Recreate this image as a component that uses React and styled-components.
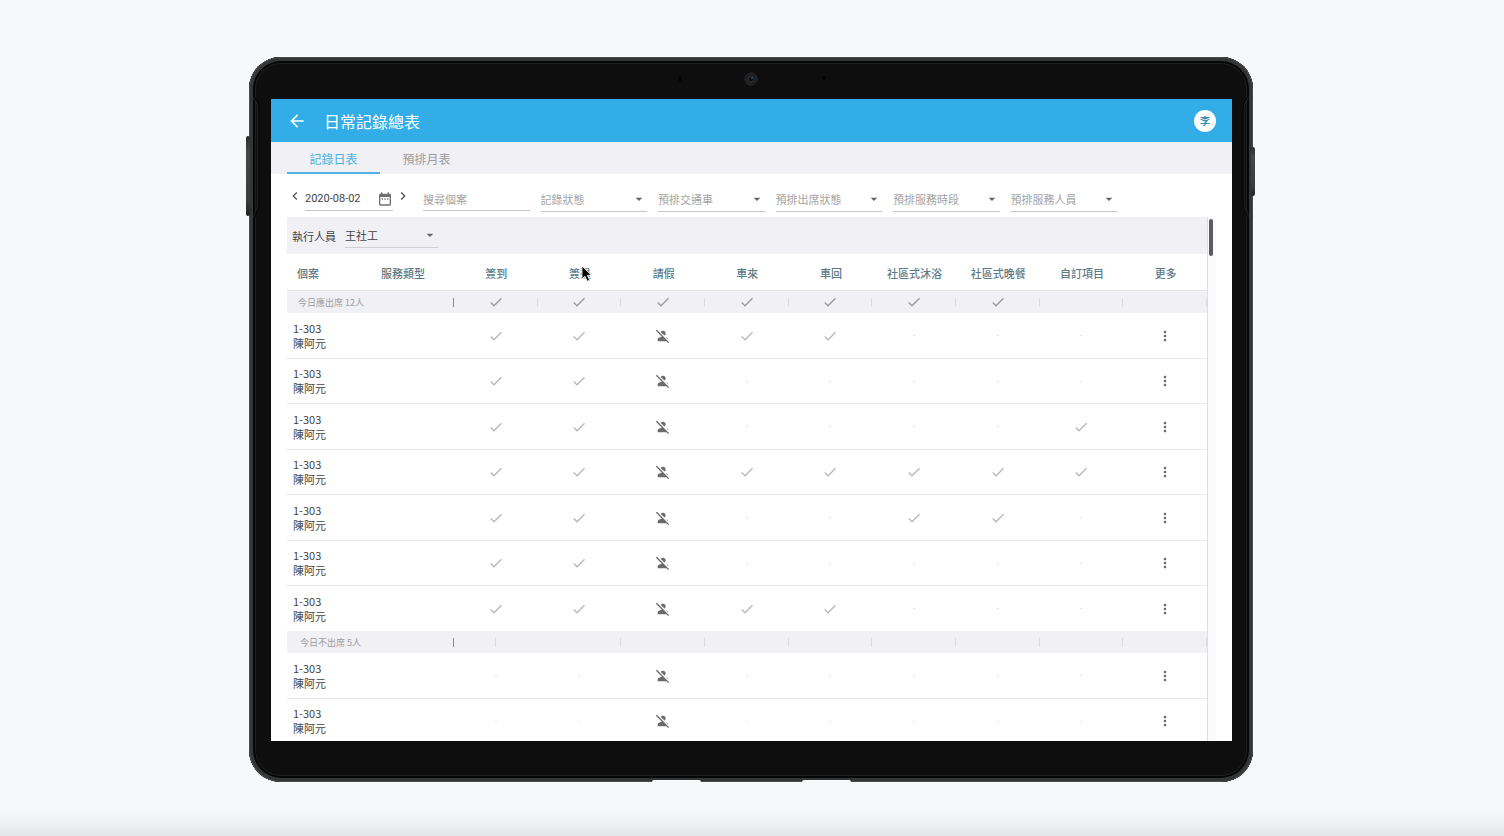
import React from 'react';
import styled, { createGlobalStyle } from 'styled-components';
import {
    MdArrowBack,
    MdArrowDropDown,
    MdCheck,
    MdChevronLeft,
    MdChevronRight,
    MdDateRange,
    MdMoreVert,
    MdPersonOff
} from 'react-icons/md';

const GlobalStyle = createGlobalStyle`
    *, *::before, *::after {
        box-sizing: border-box;
    }
    body {
        margin: 0;
        background-color: #f7f8fa;
        font-family: "Noto Sans CJK TC", "Noto Sans", sans-serif;
        font-size: 11px;
        color: #444;
    }
    button, input, select {
        font: inherit;
        color: inherit;
        border: none;
        border-radius: 0;
        background: none;
        padding: 0;
        margin: 0;
        outline: none;
    }
    svg {
        display: block;
    }
`;

const Page = styled.main`
    height: 100vh;
    min-height: 480px;
    padding: 57px 18px 54px 16px;
    background: linear-gradient(to top, #e4e5e7 0, #f1f2f4 14px, #f7f8fa 28px);
`;

const Device = styled.div`
    position: relative;
    max-width: 1004px;
    height: 100%;
    margin: 0 auto;
    padding: 42px 21px 41px 22px;
    border-radius: 32px;
    background-color: #0e0e0e;
    box-shadow: inset 0 0 0 1px #4a4b4b, inset 0 0 0 4px #343535, inset 0 0 0 6px #060606, inset 0 0 0 7px #1f1f1f;
`;

const SideButton = styled.span`
    position: absolute;
    top: ${props => props.$top};
    ${props => props.$side}: ${props => (props.$side === "left" ? "-3px" : "-2px")};
    width: 4px;
    height: ${props => props.$height};
    border-radius: 2px;
    background: linear-gradient(#2c2c2c, #464646 20%, #3c3c3c 80%, #222);
`;

const SideNotch = styled.svg`
    position: absolute;
    top: 40px;
    ${props => props.$side}: 3px;
    ${props => props.$side === "right" && "transform: scaleX(-1);"}
`;

const Foot = styled.span`
    position: absolute;
    bottom: 0;
    left: ${props => props.$left};
    width: 49px;
    height: 2px;
    border-radius: 2px 2px 0 0;
    background-color: #f7f8fa;
`;

const CameraRow = styled.svg`
    position: absolute;
    top: 14px;
    left: calc(50% - 80px);
`;

const Screen = styled.div`
    display: flex;
    flex-direction: column;
    height: 100%;
    overflow: hidden;
    background-color: #fff;
`;

const Header = styled.header`
    display: flex;
    flex: none;
    align-items: center;
    gap: 17px;
    height: 43px;
    padding: 0 16px;
    background-color: #32ade8;
    color: #fff;
`;

const IconButton = styled.button`
    display: flex;
    align-items: center;
    justify-content: center;
    width: ${props => props.$width || "20px"};
    height: ${props => props.$height || "20px"};
    cursor: pointer;
`;

const Title = styled.h1`
    flex: 1;
    margin: 0;
    font-size: 16px;
    font-weight: 400;
    line-height: 22px;
`;

const Avatar = styled.button`
    width: 22px;
    height: 22px;
    border-radius: 50%;
    background-color: #fff;
    color: #2f8fb8;
    font-size: 10px;
    font-weight: 700;
    line-height: 22px;
`;

const Tabs = styled.nav`
    display: flex;
    flex: none;
    height: 32px;
    padding: 0 16px;
    background-color: #f0f0f5;
`;

const Tab = styled.button`
    width: 93px;
    padding-top: 4px;
    border-bottom: 2px solid ${props => (props.$active ? "#55b1e0" : "transparent")};
    color: ${props => (props.$active ? "#4bb0e2" : "#9c9c9f")};
    font-size: 12px;
    line-height: 18px;
`;

const Filters = styled.div`
    display: flex;
    flex: none;
    height: 43px;
    padding: 13px 16px 0;
`;

const DateGroup = styled.div`
    display: flex;
    gap: 2px;
    margin-right: 12px;
    color: #555;
`;

const DateField = styled.label`
    display: flex;
    align-items: center;
    width: 88px;
    height: 24px;
    border-bottom: 1px solid #c4c4c4;
    color: #707070;
`;

const DateInput = styled.input`
    flex: 1;
    min-width: 0;
    color: #444;
    font-family: Roboto, sans-serif;
`;

const FilterGrid = styled.div`
    display: grid;
    grid-template-columns: repeat(6, 1fr);
    gap: 11px;
    flex: 1;
    max-width: 694px;
`;

const SearchInput = styled.input`
    min-width: 0;
    height: 24px;
    border-bottom: 1px solid #c4c4c4;
    &::placeholder {
        color: #a4a4a4;
        opacity: 1;
    }
`;

const SelectBox = styled.div`
    position: relative;
    min-width: 0;
    width: ${props => props.$width || "auto"};
    height: 25px;
    border-bottom: 1px solid ${props => (props.$filled ? "#d0d0d4" : "#c4c4c4")};
    color: ${props => (props.$filled ? "#444" : "#a4a4a4")};
`;

const Select = styled.select`
    appearance: none;
    width: 100%;
    height: 23px;
`;

const Caret = styled(MdArrowDropDown)`
    position: absolute;
    top: 4px;
    right: 0;
    color: #666;
    pointer-events: none;
`;

const Body = styled.div`
    display: flex;
    flex: 1;
    min-height: 0;
    margin: 0 16px;
    overflow: hidden;
`;

const Panel = styled.section`
    flex: 1;
    min-width: 0;
    border-right: 1px solid #dedede;
`;

const Track = styled.div`
    flex: none;
    width: 8px;
    padding: 2px 1px;
    background-color: #fbfbfb;
`;

const Thumb = styled.div`
    width: 4px;
    height: 37px;
    border-radius: 2px;
    background-color: #5c5c5c;
`;

const StaffBar = styled.div`
    display: flex;
    align-items: center;
    gap: 9px;
    height: 37px;
    padding-left: 5px;
    background-color: #f0f0f5;
`;

const Table = styled.table`
    width: 100%;
    table-layout: fixed;
    border-spacing: 0;
`;

const CaseCol = styled.col`
    width: 64px;
`;

const TypeCol = styled.col`
    width: 103px;
`;

const HeadCell = styled.th`
    position: relative;
    height: 37px;
    padding: ${props => (props.$start ? "2px 0 0 10px" : "2px 0 0 1px")};
    border-bottom: 1px solid #e6e6ea;
    color: #5d7b88;
    font-weight: 500;
    text-align: ${props => (props.$start ? "left" : "center")};
    white-space: nowrap;
`;

const Cursor = styled.svg`
    position: absolute;
    top: 11px;
    left: 43px;
`;

const GroupLabel = styled.th`
    height: ${props => props.$height};
    padding: 1px 0 0 ${props => props.$indent};
    background: linear-gradient(#8c8c90, #8c8c90) right center / 1px 9px no-repeat #f0f0f5;
    color: #9e9ea2;
    font-size: 9px;
    font-weight: 400;
    line-height: 14px;
    text-align: left;
`;

const GroupCell = styled.td`
    padding: 0;
    background: linear-gradient(#dcdce1, #dcdce1) ${props => (props.$middle ? "center" : "right")} center / 1px 9px no-repeat #f0f0f5;
    color: #9b9b9f;
    svg {
        margin: 0 auto;
    }
`;

const Row = styled.tr`
    height: 45px;
    &:nth-child(even) {
        height: 46px;
    }
    td {
        padding: 0;
        border-bottom: 1px solid #e9e9e9;
    }
    &:last-child td {
        border-bottom-color: #f0f0f5;
    }
`;

const Name = styled.td`
    && {
        padding-left: 6px;
    }
    line-height: 15px;
    white-space: nowrap;
`;

const Cell = styled.td`
    color: ${props => (props.$dark ? "#6b6b6b" : "#b9b9b9")};
    font-size: 9px;
    text-align: center;
    svg {
        margin: 0 auto;
    }
`;

const Dot = styled.span`
    display: block;
    width: 2px;
    height: 1px;
    margin: 0 auto;
    background-color: #e2e2e2;
`;

const selects = ["記錄狀態", "預排交通車", "預排出席狀態", "預排服務時段", "預排服務人員"];

const columns = ["簽到", "簽退", "請假", "車來", "車回", "社區式沐浴", "社區式晚餐", "自訂項目", "更多"];

// one character per column: v = done, x = on leave, - = empty
const groups = [
    {
        label: "今日應出席 12人",
        indent: "11px",
        height: "22px",
        marks: "vvvvvvv--",
        rows: ["vvxvv---", "vvx-----", "vvx----v", "vvxvvvvv", "vvx--vv-", "vvx-----", "vvxvv---"]
    },
    {
        label: "今日不出席 5人",
        indent: "13px",
        height: "21px",
        marks: "m--------",
        rows: ["--x-----", "--x-----"]
    }
];

const Mark = ({ type }) => {
    if (type === "v") return <MdCheck size={16} />;
    if (type === "x") return <MdPersonOff size={16} />;
    return <Dot />;
};

const Notch = ({ side }) => (
    <SideNotch $side={side} width="10" height="122" viewBox="0 0 10 122" fill="none" aria-hidden="true">
        <path d="M2 0 C2 4 6 5 6 10 V108 C6 113 2 114 2 120" stroke="#2b2b2b" />
        <path d="M3 0 C3 4 7 5 7 10 V108 C7 113 3 114 3 120" stroke="#000" />
    </SideNotch>
);

const CaseRow = ({ marks }) => (
    <Row>
        <Name>
            1-303<br />陳阿元
        </Name>
        <td />
        {marks.split("").map((type, index) => (
            <Cell key={index} $dark={type === "x"}>
                <Mark type={type} />
            </Cell>
        ))}
        <Cell $dark>
            <IconButton $width="100%" aria-label="更多">
                <MdMoreVert size={16} />
            </IconButton>
        </Cell>
    </Row>
);

const App = () => (
    <>
        <GlobalStyle />
        <Page>
            <Device>
                <SideButton $side="left" $top="79px" $height="80px" />
                <SideButton $side="right" $top="90px" $height="49px" />
                <Notch side="left" />
                <Notch side="right" />
                <Foot $left="403px" />
                <Foot $left="553px" />
                <CameraRow width="160" height="16" viewBox="0 0 160 16" aria-hidden="true">
                    <circle cx="9" cy="8" r="2" fill="#000" />
                    <circle cx="80" cy="8" r="6" fill="#1c1d1f" stroke="#2c2d2f" />
                    <circle cx="80" cy="8" r="3" fill="#0b0f16" stroke="#303338" />
                    <circle cx="81" cy="7" r="1" fill="#28466e" />
                    <circle cx="153" cy="7" r="2" fill="#030303" />
                </CameraRow>
                <Screen>
                    <Header>
                        <IconButton aria-label="返回">
                            <MdArrowBack size={20} />
                        </IconButton>
                        <Title>日常記錄總表</Title>
                        <Avatar>李</Avatar>
                    </Header>
                    <Tabs>
                        <Tab $active>記錄日表</Tab>
                        <Tab>預排月表</Tab>
                    </Tabs>
                    <Filters>
                        <DateGroup>
                            <IconButton $width="16px" $height="18px" aria-label="前一天">
                                <MdChevronLeft size={18} />
                            </IconButton>
                            <DateField>
                                <DateInput aria-label="日期" defaultValue="2020-08-02" />
                                <MdDateRange size={16} />
                            </DateField>
                            <IconButton $width="16px" $height="18px" aria-label="後一天">
                                <MdChevronRight size={18} />
                            </IconButton>
                        </DateGroup>
                        <FilterGrid>
                            <SearchInput aria-label="搜尋個案" placeholder="搜尋個案" />
                            {selects.map(name => (
                                <SelectBox key={name}>
                                    <Select aria-label={name}>
                                        <option>{name}</option>
                                    </Select>
                                    <Caret size={16} />
                                </SelectBox>
                            ))}
                        </FilterGrid>
                    </Filters>
                    <Body>
                        <Panel>
                            <StaffBar>
                                <label htmlFor="staff">執行人員</label>
                                <SelectBox $filled $width="93px">
                                    <Select id="staff">
                                        <option>王社工</option>
                                    </Select>
                                    <Caret size={16} />
                                </SelectBox>
                            </StaffBar>
                            <Table>
                                <colgroup>
                                    <CaseCol />
                                    <TypeCol />
                                    {columns.map(name => <col key={name} />)}
                                </colgroup>
                                <thead>
                                    <tr>
                                        <HeadCell $start>個案</HeadCell>
                                        <HeadCell>服務類型</HeadCell>
                                        {columns.map(name => (
                                            <HeadCell key={name}>
                                                {name}
                                                {name === "簽退" && (
                                                    <Cursor width="12" height="18" viewBox="0 0 12 18" aria-hidden="true">
                                                        <path
                                                            d="M1 1 V14 L4 11.2 L6.2 16.3 L8.6 15.2 L6.4 10.3 H10.4 Z"
                                                            fill="#000"
                                                            stroke="#fff"
                                                            strokeWidth="0.8"
                                                        />
                                                    </Cursor>
                                                )}
                                            </HeadCell>
                                        ))}
                                    </tr>
                                </thead>
                                {groups.map(group => (
                                    <tbody key={group.label}>
                                        <tr>
                                            <GroupLabel colSpan={2} $indent={group.indent} $height={group.height}>
                                                {group.label}
                                            </GroupLabel>
                                            {group.marks.split("").map((mark, index) => (
                                                <GroupCell key={index} $middle={mark === "m"}>
                                                    {mark === "v" && <MdCheck size={16} />}
                                                </GroupCell>
                                            ))}
                                        </tr>
                                        {group.rows.map((marks, index) => <CaseRow key={index} marks={marks} />)}
                                    </tbody>
                                ))}
                            </Table>
                        </Panel>
                        <Track>
                            <Thumb />
                        </Track>
                    </Body>
                </Screen>
            </Device>
        </Page>
    </>
);

export default App;
